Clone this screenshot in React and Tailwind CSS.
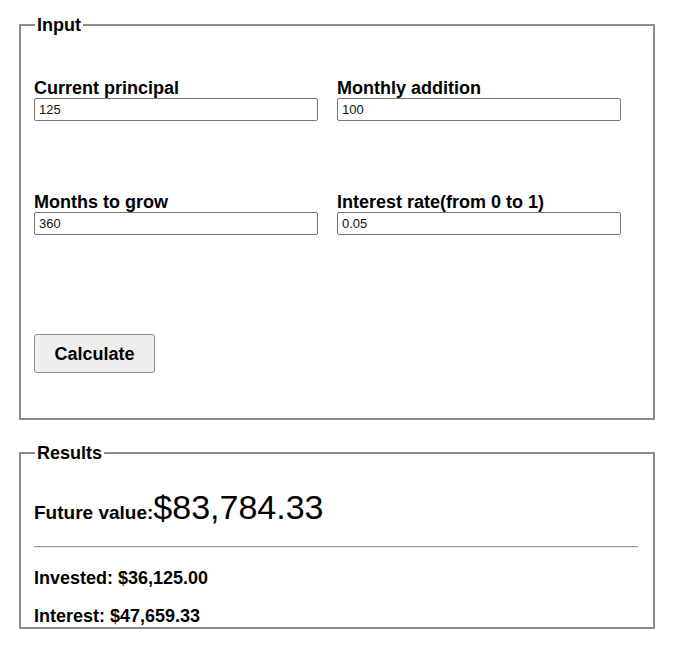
export default function App() {
  const font = "font-['Liberation_Sans',Arial,Helvetica,sans-serif]";
  return (
    <div className={`min-h-[660px] bg-white pt-[16px] pl-[19px] text-black ${font}`}>
      <fieldset className="w-[636px] h-[404px] border-2 border-solid border-[#8c8c8c] px-[13px] pb-0 pt-0">
        <legend className="ml-[1px] px-[2px] text-[18px] font-bold leading-[18px]">Input</legend>
        <div className="mt-[45px] grid grid-cols-[303px_303px] gap-y-[72px]">
          <Field label="Current principal" value="125" />
          <Field label="Monthly addition" value="100" />
          <Field label="Months to grow" value="360" />
          <Field label="Interest rate(from 0 to 1)" value="0.05" />
        </div>
        <button
          type="button"
          className="mt-[99px] h-[39px] w-[121px] rounded-[3px] border border-solid border-[#8f8f8f] bg-[#efefef] text-[18px] font-bold leading-none"
        >
          Calculate
        </button>
      </fieldset>

      <fieldset className="mt-[24px] h-[185px] w-[636px] border-2 border-solid border-[#8c8c8c] px-[13px] pb-0 pt-0">
        <legend className="ml-[1px] px-[2px] text-[18px] font-bold leading-[18px]">Results</legend>
        <div className="mt-[26px] flex items-baseline">
          <span className="text-[19px] font-bold">Future value:</span>
          <span className="text-[34px] leading-[38px]">$83,784.33</span>
        </div>
        <div className="mt-[18px] w-[604px] border-t border-b border-solid border-t-[#9a9a9a] border-b-[#e6e6e6]" />
        <div className="mt-[21px] text-[18px] font-bold leading-[18px]">Invested: $36,125.00</div>
        <div className="mt-[20px] text-[18px] font-bold leading-[18px]">Interest: $47,659.33</div>
      </fieldset>
    </div>
  );
}

function Field({ label, value }) {
  return (
    <div className="flex flex-col">
      <label className="text-[18px] font-bold leading-[18px]">{label}</label>
      <input
        readOnly
        value={value}
        className="mt-[1px] h-[23px] w-[284px] rounded-[2px] border border-solid border-[#767676] bg-white px-[4px] text-[13px] leading-[21px] text-[#111] outline-none"
      />
    </div>
  );
}
